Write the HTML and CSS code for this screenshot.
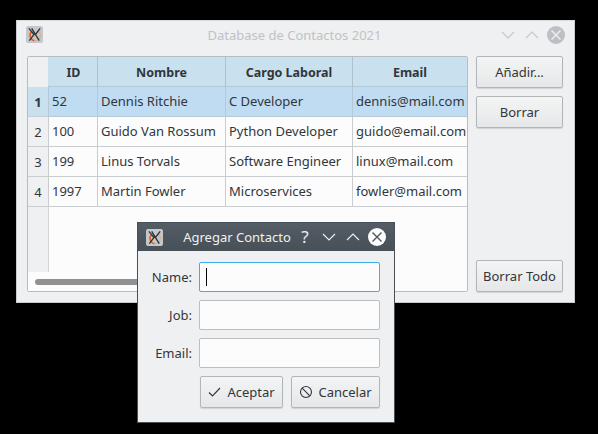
FILE: index.html
```html
<!DOCTYPE html>
<html lang="en">
<head>
    <meta charset="UTF-8">
    <title>Database de Contactos 2021</title>
    <link rel="stylesheet" href="styles.css">
</head>
<body>

    <!-- Main window -->
    <div class="window main-window">
        <div class="titlebar">
            <svg class="app-icon" viewBox="0 0 18 18">
                <rect width="18" height="18" rx="2" fill="#c4c8cc"/>
                <path d="M6 6 A5.5 5.5 0 0 0 9 15.5" fill="none" stroke="#e0642c" stroke-width="1.6"/>
                <path d="M12 5 A5.5 5.5 0 0 1 10 15.5" fill="none" stroke="#d8b080" stroke-width="1.2"/>
                <path d="M3 2.5 L8.5 9 L3.5 15.5 M6 2.5 L14 15.5 M15 2.5 L10 9" fill="none" stroke="#333" stroke-width="1.4"/>
            </svg>
            <span class="title">Database de Contactos 2021</span>
            <div class="win-buttons">
                <svg viewBox="0 0 16 16"><path d="M2 5 L8 11 L14 5" fill="none" stroke="#c3c6ca" stroke-width="1.1"/></svg>
                <svg viewBox="0 0 16 16"><path d="M2 11 L8 5 L14 11" fill="none" stroke="#c3c6ca" stroke-width="1.1"/></svg>
                <svg viewBox="0 0 18 18"><circle cx="9" cy="9" r="9" fill="#bcbfc3"/><path d="M4.5 4.5 L13.5 13.5 M13.5 4.5 L4.5 13.5" stroke="#eff0f1" stroke-width="1.4"/></svg>
            </div>
        </div>
        <div class="content">
            <div class="table">
                <div class="grid">
                    <div class="corner"></div>
                    <div class="col-head">ID</div>
                    <div class="col-head">Nombre</div>
                    <div class="col-head">Cargo Laboral</div>
                    <div class="col-head">Email</div>

                    <div class="row-head selected">1</div>
                    <div class="cell selected">52</div>
                    <div class="cell selected">Dennis Ritchie</div>
                    <div class="cell selected">C Developer</div>
                    <div class="cell selected">dennis@mail.com</div>

                    <div class="row-head">2</div>
                    <div class="cell">100</div>
                    <div class="cell">Guido Van Rossum</div>
                    <div class="cell">Python Developer</div>
                    <div class="cell">guido@email.com</div>

                    <div class="row-head">3</div>
                    <div class="cell">199</div>
                    <div class="cell">Linus Torvals</div>
                    <div class="cell">Software Engineer</div>
                    <div class="cell">linux@mail.com</div>

                    <div class="row-head">4</div>
                    <div class="cell">1997</div>
                    <div class="cell">Martin Fowler</div>
                    <div class="cell">Microservices</div>
                    <div class="cell">fowler@mail.com</div>
                </div>
                <div class="table-rest">
                    <div class="rest-gutter"></div>
                </div>
                <div class="scrollbar">
                    <div class="scroll-thumb"></div>
                </div>
            </div>
            <div class="side-buttons">
                <button class="btn">Añadir...</button>
                <button class="btn">Borrar</button>
                <button class="btn bottom">Borrar Todo</button>
            </div>
        </div>
    </div>

    <!-- Dialog -->
    <div class="window dialog">
        <div class="titlebar dark">
            <svg class="app-icon" viewBox="0 0 18 18">
                <rect width="18" height="18" rx="2" fill="#c4c8cc"/>
                <path d="M6 6 A5.5 5.5 0 0 0 9 15.5" fill="none" stroke="#e0642c" stroke-width="1.6"/>
                <path d="M12 5 A5.5 5.5 0 0 1 10 15.5" fill="none" stroke="#d8b080" stroke-width="1.2"/>
                <path d="M3 2.5 L8.5 9 L3.5 15.5 M6 2.5 L14 15.5 M15 2.5 L10 9" fill="none" stroke="#333" stroke-width="1.4"/>
            </svg>
            <span class="title">Agregar Contacto</span>
            <div class="win-buttons">
                <span class="help">?</span>
                <svg viewBox="0 0 16 16"><path d="M2 5 L8 11 L14 5" fill="none" stroke="#eff0f1" stroke-width="1.1"/></svg>
                <svg viewBox="0 0 16 16"><path d="M2 11 L8 5 L14 11" fill="none" stroke="#eff0f1" stroke-width="1.1"/></svg>
                <svg viewBox="0 0 18 18"><circle cx="9" cy="9" r="9" fill="#fcfcfc"/><path d="M4.5 4.5 L13.5 13.5 M13.5 4.5 L4.5 13.5" stroke="#4d565e" stroke-width="1.4"/></svg>
            </div>
        </div>
        <div class="form">
            <label class="form-label">Name:</label>
            <div class="input focused"><span class="caret"></span></div>
            <label class="form-label">Job:</label>
            <div class="input"></div>
            <label class="form-label">Email:</label>
            <div class="input"></div>
        </div>
        <div class="dialog-buttons">
            <button class="btn ok">
                <svg viewBox="0 0 14 14"><path d="M1 7.5 L4.5 11 L12 3" fill="none" stroke="#31363b" stroke-width="1.1"/></svg>
                Aceptar
            </button>
            <button class="btn cancel">
                <svg viewBox="0 0 14 14"><circle cx="7" cy="7" r="5.5" fill="none" stroke="#31363b" stroke-width="1.1"/><path d="M3.2 3.2 L10.8 10.8" stroke="#31363b" stroke-width="1.1"/></svg>
                Cancelar
            </button>
        </div>
    </div>

</body>
</html>
```

FILE: styles.css
```css
/* General Styling */
html, body {
    margin: 0;
    padding: 0;
    height: 434px;
    overflow: hidden;
}

body {
    background: #000000;
    color: #31363b;
    font-family: 'Noto Sans', sans-serif;
    font-size: 13px;
}

/* Windows */
.window {
    position: absolute;
    box-sizing: border-box;
    background: #eff0f1;
    display: flex;
    flex-direction: column;
}

.main-window {
    left: 16px;
    top: 20px;
    width: 559px;
    height: 283px;
    border: 1px solid #c9cbce;
    border-top-color: #d8dadc;
}

.dialog {
    left: 137px;
    top: 222px;
    width: 258px;
    height: 201px;
    border: 1px solid #474f57;
}

/* Title bars */
.titlebar {
    display: flex;
    align-items: center;
    height: 25px;
    padding: 0 9px 0 9px;
    margin-top: 1px;
    flex-shrink: 0;
}

.titlebar .title {
    flex: 1;
    text-align: center;
    color: #bfc2c5;
    padding-left: 46px;
    white-space: nowrap;
}

.app-icon {
    width: 17px;
    height: 17px;
    flex-shrink: 0;
}

.win-buttons {
    display: flex;
    align-items: center;
    gap: 8px;
}

.win-buttons svg {
    width: 16px;
    height: 16px;
}

.win-buttons svg:last-child {
    width: 18px;
    height: 18px;
    margin-left: -1px;
}

.titlebar.dark {
    height: 28px;
    margin-top: 0;
    padding: 0 8px 0 8px;
    background: linear-gradient(#545d65, #474f57);
}

.titlebar.dark .title {
    color: #eff0f1;
    padding-left: 14px;
}

.help {
    color: #eff0f1;
    font-size: 17px;
    line-height: 18px;
    width: 16px;
    text-align: center;
}

/* Main content */
.content {
    display: flex;
    flex: 1;
    gap: 8px;
    padding: 9px 11px 10px 10px;
    min-height: 0;
}

.table {
    box-sizing: border-box;
    width: 441px;
    border: 1px solid #b8bcc0;
    border-radius: 2px;
    background: #fcfcfc;
    display: flex;
    flex-direction: column;
}

.grid {
    display: grid;
    grid-template-columns: 20px 49px 128px 127px 115px;
    grid-auto-rows: 30px;
}

.corner {
    background: #eff0f1;
}

.col-head {
    display: flex;
    align-items: center;
    justify-content: center;
    padding-top: 1px;
    font-size: 12.5px;
    font-weight: 700;
    background: #c9e1ee;
    border-left: 1px solid #afc2cc;
    border-bottom: 1px solid #b8c8d2;
}

.col-head:nth-child(2) {
    border-left: none;
    padding-left: 2px;
}

.row-head {
    display: flex;
    align-items: center;
    justify-content: center;
    background: #eff0f1;
    border-bottom: 1px solid #c9cdd0;
}

.row-head.selected {
    background: #c9e1ee;
    font-weight: 700;
}

.cell {
    display: flex;
    align-items: center;
    box-sizing: border-box;
    padding: 0 0 2px 3px;
    white-space: nowrap;
    overflow: hidden;
    background: #fcfcfc;
    border-left: 1px solid #c9cdd0;
    border-bottom: 1px solid #c9cdd0;
}

.cell.selected {
    background: #c0dcf2;
    border-left-color: #b4c8d6;
    border-bottom-color: #b4c8d6;
}

.table-rest {
    flex: 1;
    display: flex;
}

.rest-gutter {
    width: 20px;
    background: #eff0f1;
    border-right: 1px solid #d4d6d8;
}

.scrollbar {
    height: 19px;
    flex-shrink: 0;
    display: flex;
    align-items: center;
    padding-left: 7px;
    background: #fcfcfc;
}

.scroll-thumb {
    width: 240px;
    height: 6px;
    border-radius: 3px;
    background: #8f9193;
}

/* Buttons */
.btn {
    box-sizing: border-box;
    height: 32px;
    padding: 0;
    font-family: inherit;
    font-size: 13px;
    color: #31363b;
    border: 1px solid #b3b6b9;
    border-radius: 2px;
    background: linear-gradient(#f3f4f4, #e6e7e8);
    box-shadow: 0 1px 1px rgba(0, 0, 0, 0.12);
    display: flex;
    align-items: center;
    justify-content: center;
}

.side-buttons {
    display: flex;
    flex-direction: column;
    width: 87px;
    gap: 8px;
}

.side-buttons .bottom {
    margin-top: auto;
}

/* Dialog form */
.form {
    display: grid;
    grid-template-columns: 54px 181px;
    column-gap: 7px;
    row-gap: 8px;
    padding: 11px 0 0 0;
}

.form-label {
    display: flex;
    align-items: center;
    justify-content: flex-end;
    height: 30px;
}

.input {
    box-sizing: border-box;
    height: 30px;
    display: flex;
    align-items: center;
    padding-left: 6px;
    background: #fcfcfc;
    border: 1px solid #bcbfc2;
    border-radius: 2px;
}

.input.focused {
    border-color: #3daee9;
}

.caret {
    width: 1px;
    height: 18px;
    background: #000000;
}

.dialog-buttons {
    display: flex;
    justify-content: flex-end;
    gap: 8px;
    padding: 8px 14px 0 0;
}

.dialog-buttons .btn {
    gap: 5px;
}

.dialog-buttons svg {
    width: 14px;
    height: 14px;
}

.ok {
    width: 83px;
}

.cancel {
    width: 89px;
}
```
